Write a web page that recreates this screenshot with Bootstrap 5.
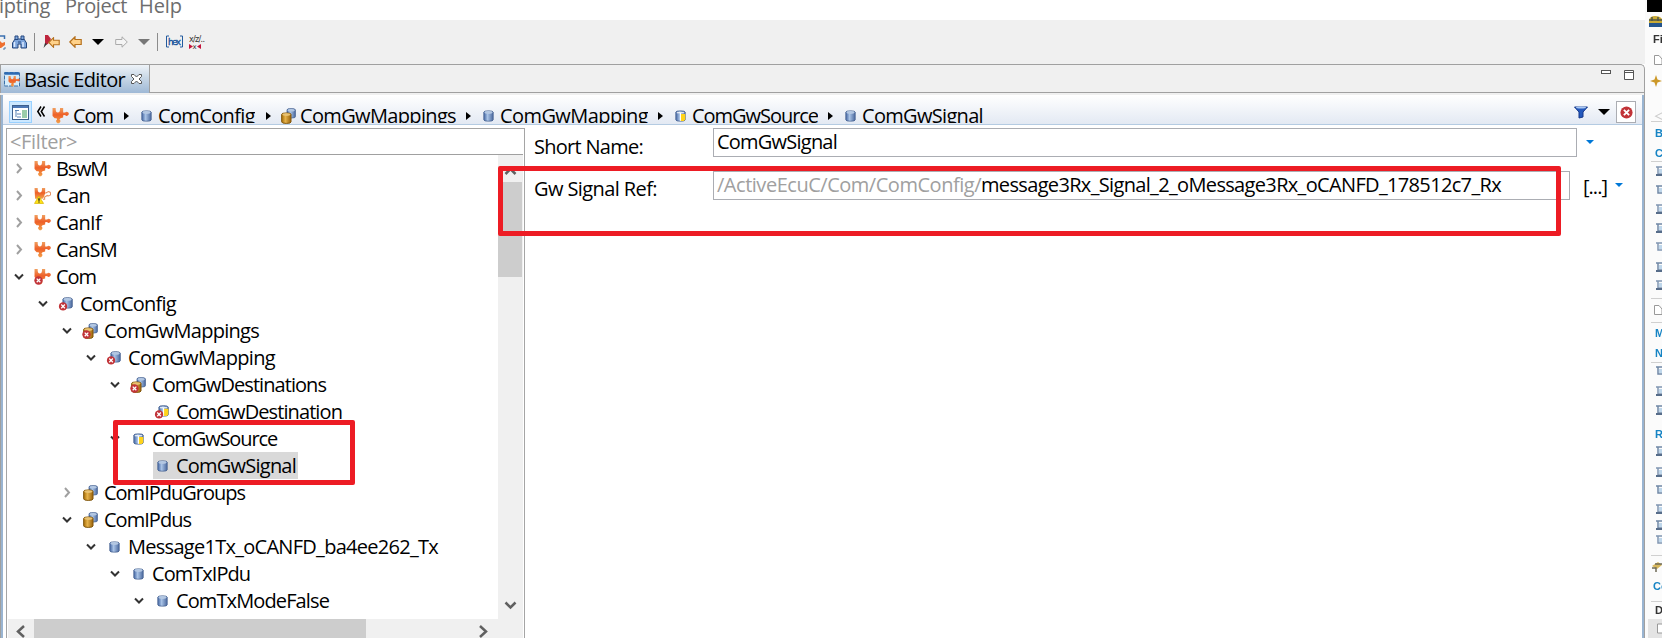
<!DOCTYPE html>
<html lang="en">
<head>
<meta charset="utf-8">
<title>Basic Editor</title>
<link href="https://cdn.jsdelivr.net/npm/bootstrap@5.3.0/dist/css/bootstrap.min.css" rel="stylesheet">
<style>
body{width:1662px;height:638px;overflow:hidden;font:20px/27px "Open Sans","Noto Sans",sans-serif;color:#000;background:#fff}
svg{display:block;flex:none;overflow:visible}
.fit{white-space:pre;flex:none;display:block}
.main-pane{width:1645px}
.menu-row{height:20px;color:#6d6d6d;width:1647px;line-height:20px}
.menu-row .fit{margin-top:-4px}
.tool-row{height:44px;background:#f0f0f0;width:1647px}
.sep{width:1px;height:18px;background:#8c8c8c}
.tab-row{height:31px;background:#f0f0f0;border-top:1px solid #a0a0a0;border-right:1px solid #a0a0a0;border-radius:0 5px 0 0}
.tab-on{width:150px;height:28px;background:linear-gradient(#eef3f8,#c8d7e6 45%,#9fb9d6);border-right:1px solid #a0a0a0;border-left:1px solid #a0a0a0}
.tab-rest{height:28px;border-bottom:1px solid #a0a0a0}
.frame{border-left:1px solid #a0a0a0;border-right:1px solid #a0a0a0}
.frame-in{border-left:2px solid #99b4d1;border-right:2px solid #99b4d1;background:#fff}
.crumbs{height:30px;background:linear-gradient(#fff,#e3e9f3);border-bottom:1px solid #b4cbe2;overflow:hidden}
.crumbs .fit{height:28px;overflow:hidden;line-height:27px;padding-top:7px}
.view-btn{width:23px;height:22px;background:#cce8ff;border:1px solid #99d1ff}
.tree-box{width:519px;margin:3px 0 0 3px;border:1px solid #a5a5a5;border-bottom:0;height:510px}
.filter{height:26px;color:#a0a0a0;border-bottom:1px solid #a0a0a0;margin:0 1px}
.tree-row{height:27px}
.chosen{background:#d9d9d9}
.vbar{width:25px;background:#f0f0f0;margin-right:1px}
.vthumb{height:95px;background:#cdcdcd;margin-right:1px}
.hbar{height:19px;background:#f0f0f0;margin:0 1px}
.hthumb{width:332px;height:19px;background:#cdcdcd}
.field{height:29px;border:1px solid #abadb3;line-height:25px}
.mark-red{position:absolute;border:5px solid #ed1c24;border-radius:2px;pointer-events:none}
.side{width:17px;background:#fbfbfb;overflow:hidden}
.side-in{filter:blur(.6px)}
.side-in>*{overflow:hidden;white-space:nowrap}
</style>
</head>
<body class="position-relative">
<svg width="0" height="0" class="position-absolute">
<defs>
<linearGradient id="gb"><stop offset="0" stop-color="#3f62a0"/><stop offset=".4" stop-color="#a9c3e6"/><stop offset="1" stop-color="#48669c"/></linearGradient>
<linearGradient id="gg"><stop offset="0" stop-color="#a36b05"/><stop offset=".4" stop-color="#e6b24a"/><stop offset="1" stop-color="#96600a"/></linearGradient>
<linearGradient id="go" x2="0" y2="1"><stop offset="0" stop-color="#f0a060"/><stop offset=".45" stop-color="#ee5f28"/><stop offset="1" stop-color="#f3a04a"/></linearGradient>
<symbol id="cyl" viewBox="0 0 10 11"><path d="M.5 2Q.5.5 5 .5T9.500 2V9Q9.500 10.500 5 10.500T.5 9Z" fill="url(#gb)" stroke="#46618f" stroke-width=".8"/><ellipse cx="5" cy="2.200" rx="3.800" ry="1.300" fill="#b3c7e2"/></symbol>
<symbol id="cylg" viewBox="0 0 10 11"><path d="M.5 2Q.5.500 5 .5T9.500 2V9Q9.500 10.500 5 10.500T.5 9Z" fill="url(#gg)" stroke="#7c5208" stroke-width=".9"/><ellipse cx="5" cy="2.200" rx="3.800" ry="1.300" fill="#e8c273"/></symbol>
<symbol id="cyly" viewBox="0 0 10 11"><path d="M.5 2Q.5.5 5 .5T9.500 2V9Q9.500 10.500 5 10.500T.5 9Z" fill="url(#gb)" stroke="#46618f" stroke-width=".8"/><path d="M5 3.500H9.500V9L8 10.300H5Z" fill="#ffd31a"/><path d="M1.500 2.500H8.500M5 2.500V10" stroke="#fff" stroke-width="1"/></symbol>
<symbol id="puz" viewBox="0 0 16 15"><path d="M.5 0H3.500C3.300 3 4 4.300 5.500 4.300S7.700 3 7.500 0H10.500V4.200L12.300 4.300A1.900 1.900 0 1 1 12.300 6.600L10.500 6.800V9L8 9.500 7 10.800A1.900 1.900 0 1 1 4.800 10.800L4.300 9.500H2.500L.5 7.500Z" fill="url(#go)"/></symbol>
<symbol id="puzw" viewBox="0 0 16 15"><path d="M.5 0H3.500C3.300 3 4 4.300 5.500 4.300S7.700 3 7.500 0H10.500V8L8 10H1Z" fill="url(#go)"/><path d="M10.500 5 12 4.300A2 2 0 1 1 12.500 7L10 8.500V10.500H8.500" fill="#fff" stroke="#e59060" stroke-width="1"/><path d="M4.500 7.500 9 14.500H.5Z" fill="#ffe417" stroke="#d8b300" stroke-width=".7"/><path d="M4.700 9.500V12M4.700 12.700V13.700" stroke="#222" stroke-width="1.300"/></symbol>
<symbol id="err" viewBox="0 0 9 9"><circle cx="4.500" cy="4.500" r="4.200" fill="#c13338"/><path d="M2.700 2.700 6.300 6.300M6.300 2.700 2.700 6.300" stroke="#fff" stroke-width="1.300"/></symbol>
<symbol id="i-puz" viewBox="0 0 16 15"><use href="#puz" width="16" height="15"/></symbol>
<symbol id="i-puzw" viewBox="0 0 16 15"><use href="#puzw" width="16" height="15"/></symbol>
<symbol id="i-puze" viewBox="0 0 16 15"><use href="#puz" width="16" height="15"/><use href="#err" x="0" y="6.500" width="8.500" height="8.500"/></symbol>
<symbol id="i-cyl" viewBox="0 0 16 15"><use href="#cyl" x="3" y="2" width="10" height="11"/></symbol>
<symbol id="i-cyly" viewBox="0 0 16 15"><use href="#cyly" x="3" y="2" width="10" height="11"/></symbol>
<symbol id="i-cyle" viewBox="0 0 16 15"><use href="#cyl" x="4" y="1" width="10" height="11"/><use href="#err" x=".5" y="5.500" width="8.500" height="8.500"/></symbol>
<symbol id="i-cylye" viewBox="0 0 16 15"><use href="#cyly" x="4" y="1" width="10" height="11"/><use href="#err" x=".5" y="5.500" width="8.500" height="8.500"/></symbol>
<symbol id="i-two" viewBox="0 0 16 15"><use href="#cyl" x="6" y="0" width="9" height="10"/><use href="#cylg" x="1" y="4" width="10" height="11"/></symbol>
<symbol id="i-twoe" viewBox="0 0 16 15"><use href="#cyl" x="6" y="0" width="9" height="10"/><use href="#cylg" x="1" y="4" width="10" height="11"/><use href="#err" x="0" y="6.500" width="8.500" height="8.500"/></symbol>
<symbol id="arr" viewBox="0 0 13 12"><path d="M.8 6 6 .8V3.500H12.200V8.500H6V11.200Z" fill="#ffd28a" stroke="#b5701c" stroke-width="1.200"/></symbol>
</defs></svg>

<div class="d-flex">
<main class="main-pane flex-shrink-0">
  <nav class="menu-row d-flex">
    <span class="fit" data-w="51" style="margin-left:-1px">ipting</span><span class="fit" data-w="62" style="margin-left:15px">Project</span><span class="fit" data-w="43" style="margin-left:12px">Help</span>
  </nav>
  <div class="tool-row d-flex align-items-center">
    <svg width="6" height="15"><path d="M0 1H4.500V4" fill="none" stroke="#3b70b0" stroke-width="1.500"/><path d="M0 6 2 8 5 7V10L1 13H0Z" fill="#ee7030"/><path d="M3 14H5V12" fill="none" stroke="#4a78aa"/></svg>
    <svg width="15" height="14" style="margin-left:6px"><path d="M3 1H6V4H9V1H12V4L14.500 8V13H9V9H6V13H.5V8L3 4Z" fill="#7fa6dc" stroke="#24477f"/><path d="M2.500 7V12M11 7V12" stroke="#dceaff" stroke-width="1.500"/><path d="M3 4.500H6M9 4.500H12M6 7H9" stroke="#24477f"/></svg>
    <span class="sep" style="margin-left:7px"></span>
    <svg width="18" height="14" style="margin-left:8px"><path d="M2 0 5 0 8 4 5 9 2 10Z" fill="#be263e"/><path d="M2 8 .5 13 4 9Z" fill="#333"/><use href="#arr" x="5" y="2" width="12" height="11"/></svg>
    <svg width="13" height="12" style="margin-left:8px"><use href="#arr" width="13" height="12"/></svg>
    <svg width="12" height="6" style="margin-left:10px"><path d="M0 0H12L6 6Z"/></svg>
    <svg width="13" height="12" style="margin-left:11px"><path d="M12.300 6 7 .8V3.500H.7V8.500H7V11.200Z" fill="#f4f4f4" stroke="#aaa"/></svg>
    <svg width="12" height="6" style="margin-left:10px"><path d="M0 0H12L6 6Z" fill="#777"/></svg>
    <span class="sep" style="margin-left:7px"></span>
    <svg width="17" height="14" style="margin-left:8px"><path d="M3 1H.5V12H3M14 1H16.500V12H14" fill="none" stroke="#235b9e"/><text x="2" y="10" font-size="9" textLength="13" font-family="DejaVu Sans" fill="#12509b" stroke="#12509b" stroke-width=".3">hex</text></svg>
    <svg width="17" height="15" style="margin-left:6px"><text x="0" y="7" font-size="8" textLength="16" font-family="DejaVu Sans" fill="#333">x/z/..</text><path d="M0 9 4 11.500 0 14ZM12 9 8 11.500 12 14Z" fill="#c3133c"/><text x="3.500" y="14" font-size="7" font-family="DejaVu Sans" fill="#333">x</text></svg>
  </div>

  <div class="tab-row d-flex">
    <div class="tab-on d-flex align-items-center flex-shrink-0">
      <svg width="17" height="15" style="margin-left:3px"><rect x=".5" y=".5" width="15" height="13.500" fill="#d5ecfa" stroke="#3b70a8" stroke-dasharray="4 1"/><path d="M1 1.500H15" stroke="#2d6bb4" stroke-width="2.500"/><use href="#puz" x="4" y="4" width="12" height="11"/></svg>
      <span class="fit" data-w="101" style="margin-left:3px">Basic Editor</span>
      <svg width="11" height="10" style="margin-left:6px"><path d="M.5.5H3L5.500 3 8 .5H10.500V2.500L8 5 10.500 7.500V9.500H8L5.500 7 3 9.500H.5V7.500L3 5 .5 2.500Z" fill="#fff" stroke="#555"/></svg>
    </div>
    <div class="tab-rest flex-grow-1 d-flex justify-content-end">
      <svg width="10" height="4" style="margin:5px 13px 0 0"><rect x=".5" y=".5" width="9" height="3" fill="#fff" stroke="#555"/></svg>
      <svg width="10" height="10" style="margin:5px 10px 0 0"><path d="M.5.5H9.500V9.500H.5ZM.5 2.500H9.500" fill="#fff" stroke="#555"/></svg>
    </div>
  </div>

  <div class="frame"><div class="frame-in">
    <div class="crumbs d-flex align-items-start">
      <div class="view-btn d-flex align-items-center justify-content-center flex-shrink-0" style="margin:6px 0 0 6px"><svg width="17" height="15"><rect x=".5" y=".5" width="16" height="14" fill="#fff" stroke="#3d5f8c"/><path d="M1 2H16" stroke="#4c78b6" stroke-width="2"/><path d="M3 5.500H7M5 9H9M5 12H9M4 6V12" stroke="#5b84b5"/><rect x="10" y="5" width="5" height="8" fill="#9accaa"/></svg></div>
      <svg width="8" height="11" style="margin:11px 0 0 5px"><path d="M4 .5.8 5.500 4 10.500M7.500.5 4.300 5.500 7.500 10.500" fill="none" stroke="#000" stroke-width="1.500"/></svg>
      <div id="crumbs" class="d-flex align-items-start" style="margin-left:8px"></div>
      <div class="ms-auto d-flex align-items-center" style="margin-top:6px">
        <svg width="14" height="12"><path d="M.5 1H13.500L9 6V11L5 12V6Z" fill="#2459bd" stroke="#17398a"/><ellipse cx="7" cy="1.500" rx="5" ry="1" fill="#a9c7f2"/></svg>
        <svg width="12" height="6" style="margin-left:10px"><path d="M0 0H12L6 6Z"/></svg>
        <span class="d-flex align-items-center justify-content-center bg-white" style="width:20px;height:22px;border:1px solid #abadb3;margin:0 6px 0 6px"><svg width="13" height="13"><use href="#err" width="13" height="13"/></svg></span>
      </div>
    </div>
    <div class="d-flex">
      <div class="tree-box flex-shrink-0">
        <div class="filter d-flex"><span class="fit" data-w="67" style="margin-left:2px;line-height:26px">&lt;Filter&gt;</span></div>
        <div class="d-flex" style="height:464px"><div id="tree" class="flex-grow-1"></div>
          <div class="vbar">
            <svg width="25" height="27"><path d="M7.500 19 12.500 14 17.500 19" fill="none" stroke="#606060" stroke-width="2.500"/></svg>
            <div class="vthumb"></div>
            <svg width="25" height="20" style="margin-top:320px"><path d="M7.500 5.500 12.500 10.500 17.500 5.500" fill="none" stroke="#606060" stroke-width="2.500"/></svg>
          </div>
        </div>
        <div class="hbar d-flex">
          <svg width="26" height="19"><path d="M16 7 10 12.500 16 18" fill="none" stroke="#606060" stroke-width="2.500"/></svg>
          <div class="hthumb"></div>
          <svg width="130" height="19"><path d="M114 7 120 12.500 114 18" fill="none" stroke="#606060" stroke-width="2.500"/></svg>
        </div>
      </div>
      <div class="flex-grow-1" style="padding:3px 0 0 8px">
        <div class="d-flex" style="height:43px">
          <div style="width:180px;padding:5px 0 0 1px"><span class="fit" data-w="109">Short Name:</span></div>
          <div class="field" style="width:864px;padding-left:3px"><span class="fit" data-w="120">ComGwSignal</span></div>
          <svg width="8" height="4" style="margin:12px 0 0 9px"><path d="M0 0H8L4 4Z" fill="#0078d7"/></svg>
        </div>
        <div class="d-flex">
          <div style="width:180px;padding:4px 0 0 1px"><span class="fit" data-w="123">Gw Signal Ref:</span></div>
          <div class="field d-flex" style="width:857px;padding-left:3px"><span class="fit" data-w="264" style="color:#a0a0a0">/ActiveEcuC/Com/ComConfig/</span><span class="fit" data-w="520">message3Rx_Signal_2_oMessage3Rx_oCANFD_178512c7_Rx</span></div>
          <span class="fit" data-w="24" style="margin:2px 0 0 13px">[...]</span>
          <svg width="8" height="4" style="margin:12px 0 0 8px"><path d="M0 0H8L4 4Z" fill="#0078d7"/></svg>
        </div>
      </div>
    </div>
  </div></div>
</main>
<aside class="side flex-shrink-0" style="height:638px"><div class="side-in" id="side"></div></aside>
</div>
<div class="mark-red" style="left:498px;top:166px;width:1063px;height:70px"></div>
<div class="mark-red" style="left:113px;top:420px;width:242px;height:65px"></div>

<script src="https://cdn.jsdelivr.net/npm/bootstrap@5.3.0/dist/js/bootstrap.bundle.min.js"></script>
<script>
const icon = (n, css = '') => `<svg width="17" height="16" style="${css}"><use href="#i-${n}" width="17" height="16"/></svg>`;

// level, state, icon, label, label width
const rows = [
 [0,'c','puz','BswM',51],[0,'c','puzw','Can',34],[0,'c','puz','CanIf',45],[0,'c','puz','CanSM',61],[0,'o','puze','Com',40],
 [1,'o','cyle','ComConfig',96],[2,'o','twoe','ComGwMappings',155],[3,'o','cyle','ComGwMapping',147],[4,'o','twoe','ComGwDestinations',174],
 [5,'','cylye','ComGwDestination',166],[4,'o','cyly','ComGwSource',125],[5,'','cyl','ComGwSignal',120],[2,'c','two','ComIPduGroups',141],
 [2,'o','two','ComIPdus',87],[3,'o','cyl','Message1Tx_oCANFD_ba4ee262_Tx',310],[4,'o','cyl','ComTxIPdu',98],[5,'o','cyl','ComTxModeFalse',153]];
const twist = {c:'<path d="M3 1 7 5.500 3 10" fill="none" stroke="#a0a0a0" stroke-width="2"/>', o:'<path d="M1 3.500 5 7.500 9 3.500" fill="none" stroke="#333" stroke-width="2"/>', '':''};
document.getElementById('tree').innerHTML = rows.map(([l,s,i,t,w]) => {
  const sel = t === 'ComGwSignal';
  return `<div class="tree-row d-flex align-items-center" style="padding-left:${7+24*l}px"><svg width="10" height="11">${twist[s]}</svg>
  <div class="d-flex align-items-center ${sel ? 'chosen' : ''}" style="margin-left:${sel ? 9 : 10}px;padding-left:${sel ? 1 : 0}px;height:27px">${icon(i)}<span class="fit" data-w="${w}" style="margin:0 2px 0 5px">${t}</span></div></div>`;
}).join('');

// icon x, icon, label x, label, label width, arrow x
const crumbs = [[52,'puz',73,'Com',40,124],[138,'cyl',158,'ComConfig',97,266],[280,'two',300,'ComGwMappings',156,466],[480,'cyl',500,'ComGwMapping',148,658],[672,'cyly',692,'ComGwSource',126,828],[842,'cyl',862,'ComGwSignal',121,0]];
let at = 53;
document.getElementById('crumbs').innerHTML = crumbs.map(([ix,i,lx,t,w,ax]) => {
  const h = icon(i, `margin:13px 0 0 ${ix-at}px`) + `<span class="fit" data-w="${w}" style="margin-left:${lx-ix-17}px">${t}</span>` +
   (ax ? `<svg width="5" height="8" style="margin:17px 0 0 ${ax-lx-w}px"><path d="M0 0 5 4 0 8Z"/></svg>` : '');
  at = ax + 5; return h;
}).join('');

// sliver of the neighbouring window: top, height, kind, value
const g = y => [y-6,12,'g'];
const side = [[0,12,'bg','#000'],[15,12,'gold'],[32,14,'t','Fi','#333'],[54,12,'page'],[75,12,'star'],[109,12,'t','◁','#ccc'],[121,1,'ln'],
 [126,14,'t','B','#1684c4'],[146,14,'t','C','#1684c4'],[161,1,'ln'],g(171),g(190),g(209),g(228),g(247),g(267),g(285),[298,1,'ln'],[304,12,'page'],[322,1,'ln'],
 [326,14,'t','M','#1684c4'],[346,14,'t','N','#1684c4'],[362,1,'ln'],g(371),g(391),g(410),[427,14,'t','R','#1684c4'],g(451),g(472),g(490),g(509),g(525),[534,12,'g2'],
 [555,1,'ln'],[561,12,'gold2'],[579,14,'t','Co','#1684c4'],[601,1,'ln'],[603,14,'t','D','#333'],[619,19,'last']];
let end = 0, n = 0;
document.getElementById('side').innerHTML = side.map(([y,h,k,v,c]) => {
  const m = y - end; end = y + h; n++;
  let css = `height:${h}px;margin-top:${m}px;`, body = '';
  if (k === 'bg') css += `background:${v};margin-left:2px`;
  if (k === 'ln') css += 'background:#d0d0d0;margin-left:6px';
  if (k === 't') { css += `color:${c};font:bold 11px/${h}px 'Liberation Sans',sans-serif;padding-left:${v === 'Co' || v === 'Fi' ? 8 : 10}px`; body = v; }
  if (k === 'g' || k === 'g2') body = `<svg width="17" height="12"><path d="M11 2H17M13 2V9H17" fill="none" stroke="${n%2?'#8197b3':'#7088a6'}" stroke-width="1.500"/><path d="${n%3?'M11 10H17':'M14 6H17'}" stroke="${k==='g2'?'#e59357':'#566c89'}" stroke-width="2"/><rect x="14" y="4" width="3" height="4" fill="#bfd7eb"/></svg>`;
  if (k === 'gold') body = '<svg width="17" height="12"><path d="M4 11V5Q5 1 10 1T17 4V11Z" fill="#c9aa35"/><path d="M4 5H17M7 2V6M13 2V6" stroke="#4f5545" stroke-width="1.500"/><path d="M4 8H17V12H4Z" fill="#24558e"/></svg>';
  if (k === 'gold2') body = '<svg width="17" height="12"><path d="M7 5 13 1 17 4 12 8Z" fill="#d8b85c"/><path d="M10 3H17M7 7H11V11" stroke="#6e6a56" fill="none" stroke-width="1.500"/></svg>';
  if (k === 'star') body = '<svg width="17" height="12"><path d="M11 0 12.500 4.500 17 6 12.500 7.500 11 12 9.500 7.500 5 6 9.500 4.500Z" fill="#cc9828"/></svg>';
  if (k === 'page' || k === 'last') { body = `<svg width="17" height="${h}"><path d="M9.500 ${h/2-4.5}H14L17 ${h/2-1}V${h/2+4.5}H9.500Z" fill="#fff" stroke="#999"/></svg>`; if (k === 'last') css += 'background:#e4e4e4;margin-left:3px'; }
  return `<div style="${css}">${body}</div>`;
}).join('');

// spread every label over its width
document.querySelectorAll('.fit').forEach(e => {
  const r = document.createRange(); r.selectNodeContents(e);
  const w = +e.dataset.w, nat = r.getBoundingClientRect().width;
  e.style.letterSpacing = (w - nat) / e.textContent.length + 'px';
  e.style.width = w + 'px';
});
</script>
</body>
</html>
